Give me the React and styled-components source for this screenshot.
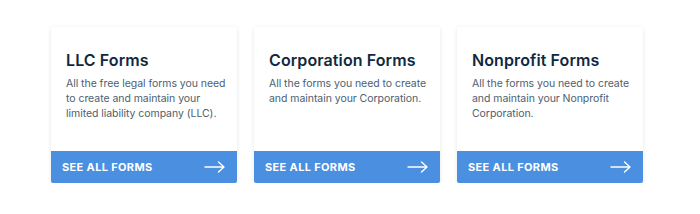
import React from "react";
import styled, { createGlobalStyle } from "styled-components";

const GlobalStyle = createGlobalStyle`
  body {
    margin: 0;
    background: #ffffff;
    font-family: Inter, "Open Sans", sans-serif;
  }
`;

const Page = styled.div`
  display: flex;
  gap: 17px;
  padding: 27px 0 0 51px;
`;

const Card = styled.div`
  width: 186px;
  height: 156px;
  display: flex;
  flex-direction: column;
  background: #ffffff;
  border-radius: 2px;
  box-shadow: 0 1px 4px rgba(0, 0, 0, 0.1);
  overflow: hidden;
`;

const Body = styled.div`
  flex: 1;
  padding: 23px 8px 0 15px;
`;

const Title = styled.h3`
  margin: 0 0 6px 0;
  font-size: 16px;
  font-weight: 600;
  color: #0f2a3f;
  letter-spacing: 0.1px;
  white-space: nowrap;
`;

const Desc = styled.p`
  margin: 0;
  font-size: 10.5px;
  line-height: 15px;
  color: #4d6070;
  letter-spacing: -0.05px;
`;

const Button = styled.a`
  height: 32px;
  display: flex;
  align-items: center;
  justify-content: space-between;
  padding: 0 11px 0 11px;
  background: #4a8fe0;
  color: #ffffff;
  font-size: 11px;
  font-weight: 700;
  letter-spacing: 0.35px;
  text-decoration: none;
  cursor: pointer;
`;

const Arrow = () => (
  <svg width="22" height="12" viewBox="0 0 22 12" fill="none">
    <path
      d="M1 6h19M14.5 1l5.5 5-5.5 5"
      stroke="#ffffff"
      strokeWidth="1.4"
      strokeLinecap="round"
      strokeLinejoin="round"
    />
  </svg>
);

const cards = [
  {
    title: "LLC Forms",
    desc: "All the free legal forms you need to create and maintain your limited liability company (LLC).",
  },
  {
    title: "Corporation Forms",
    desc: "All the forms you need to create and maintain your Corporation.",
  },
  {
    title: "Nonprofit Forms",
    desc: "All the forms you need to create and maintain your Nonprofit Corporation.",
  },
];

function FormCard({ title, desc }) {
  return (
    <Card>
      <Body>
        <Title>{title}</Title>
        <Desc>{desc}</Desc>
      </Body>
      <Button>
        SEE ALL FORMS
        <Arrow />
      </Button>
    </Card>
  );
}

export default function App() {
  return (
    <>
      <GlobalStyle />
      <Page>
        {cards.map((c) => (
          <FormCard key={c.title} {...c} />
        ))}
      </Page>
    </>
  );
}
